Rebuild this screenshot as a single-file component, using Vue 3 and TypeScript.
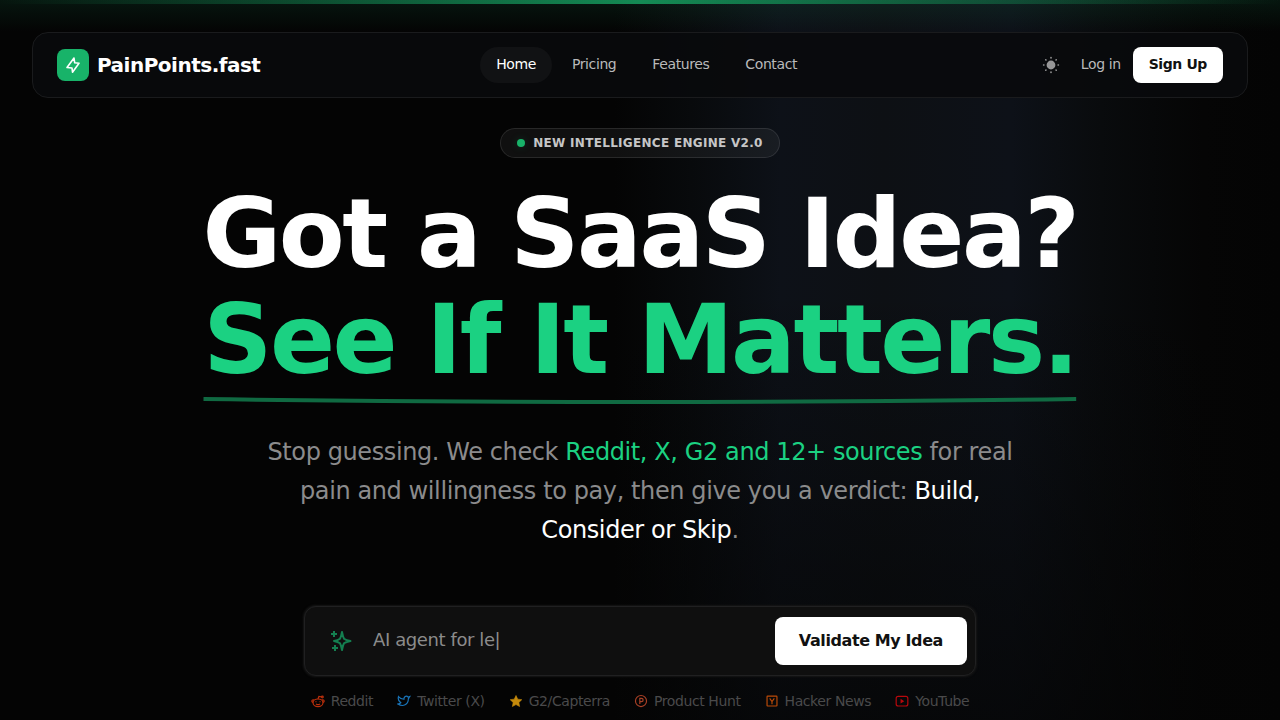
<script setup lang="ts">
import { ref } from 'vue'

interface NavItem {
  label: string
  active: boolean
}

interface Source {
  name: string
  icon: 'reddit' | 'twitter' | 'star' | 'producthunt' | 'hackernews' | 'youtube'
}

const navItems: NavItem[] = [
  { label: 'Home', active: true },
  { label: 'Pricing', active: false },
  { label: 'Features', active: false },
  { label: 'Contact', active: false },
]

const sources: Source[] = [
  { name: 'Reddit', icon: 'reddit' },
  { name: 'Twitter (X)', icon: 'twitter' },
  { name: 'G2/Capterra', icon: 'star' },
  { name: 'Product Hunt', icon: 'producthunt' },
  { name: 'Hacker News', icon: 'hackernews' },
  { name: 'YouTube', icon: 'youtube' },
]

const rays = [0, 45, 90, 135, 180, 225, 270, 315]
const idea = ref('')
</script>

<template>
  <div class="page">
    <div class="beam" aria-hidden="true"></div>

    <header class="navbar">
      <a class="brand" href="#">
        <span class="brand-mark">
          <svg viewBox="0 0 32 32" aria-hidden="true">
            <path d="M17 9L10 18.500L15 19L15.500 23.200L22 14.200L17.700 13.800Z" />
          </svg>
        </span>
        <span class="brand-name">PainPoints.fast</span>
      </a>

      <nav class="links" aria-label="Main">
        <a
          v-for="item in navItems"
          :key="item.label"
          class="link"
          :class="{ active: item.active }"
          href="#"
          >{{ item.label }}</a
        >
      </nav>

      <div class="actions">
        <button class="theme" type="button" aria-label="Toggle theme">
          <svg viewBox="0 0 20 20" aria-hidden="true">
            <circle cx="10" cy="10" r="3.600" fill="currentColor" />
            <path
              v-for="ray in rays"
              :key="ray"
              d="M10 2.600V2.900"
              :transform="`rotate(${ray} 10 10)`"
            />
          </svg>
        </button>
        <a class="login" href="#">Log in</a>
        <a class="signup" href="#">Sign Up</a>
      </div>
    </header>

    <main class="hero">
      <p class="badge"><span class="dot"></span>NEW INTELLIGENCE ENGINE V2.0</p>

      <h1 class="title">
        <span class="line">Got a SaaS Idea?</span>
        <span class="line accent">
          See If It Matters.
          <svg class="stroke" viewBox="0 0 874 12" preserveAspectRatio="none" aria-hidden="true">
            <path d="M0.500 4Q437 10 873.500 4" />
          </svg>
        </span>
      </h1>

      <p class="lead">
        Stop guessing. We check <span class="green">Reddit, X, G2 and 12+ sources</span> for real
        pain and willingness to pay, then give you a verdict:
        <span class="white">Build, Consider or Skip</span>.
      </p>

      <form class="idea" @submit.prevent>
        <svg class="spark" viewBox="0 0 24 24" aria-hidden="true">
          <path
            d="M13 3Q13.800 7.500 15 9.700Q17 11.200 21.500 12Q17 12.800 15 14.300Q13.800 16.500 13 21Q12.200 16.500 11 14.300Q9 12.800 5 12Q9 11.200 11 9.700Q12.200 7.500 13 3Z"
          />
          <path d="M5 2V8M2 5H8M6 16V22M3 19H9" />
        </svg>
        <input
          v-model="idea"
          class="field"
          type="text"
          aria-label="Your SaaS idea"
          placeholder="AI agent for le|"
        />
        <button class="submit" type="submit">Validate My Idea</button>
      </form>

      <ul class="sources">
        <li v-for="source in sources" :key="source.name" class="source">
          <svg class="icon" :class="source.icon" viewBox="0 0 24 24" aria-hidden="true">
            <g v-if="source.icon === 'reddit'">
              <ellipse cx="12" cy="15" rx="8.500" ry="6.500" />
              <path d="M12 8.500L13.500 4L18 5M5 10.500C1.500 9 0 13 3.500 14.500M19 10.500C22.500 9 24 13 20.500 14.500" />
              <circle cx="19.500" cy="5" r="1.500" />
              <path d="M8.500 12.500v1.500M15.500 12.500v1.500M8.500 17.200q3.500 2 7 0" />
            </g>
            <path
              v-else-if="source.icon === 'twitter'"
              d="M22 4.500c-1 .5-2 .7-3 .8-1.500-1.700-4-1.700-5.500-.5-1.300 1-1.700 2.500-1.500 4.200C8 9 5 7.500 2.500 4.500c-1 4 0 8 4 10.500-1.300 1.200-3 2-5 2.200 9 5.500 18 1 18-9 .8-.8 1.700-2 2.500-3.700z"
            />
            <path
              v-else-if="source.icon === 'star'"
              d="M12 2.500l3 6.300 7 .9-5.100 4.800 1.300 7-6.200-3.400-6.200 3.400 1.300-7L2 9.700l7-.9z"
            />
            <g v-else-if="source.icon === 'producthunt'">
              <circle cx="12" cy="12" r="9.500" />
              <path d="M10 17V7.500h2.800a2.800 2.800 0 010 5.700H10" />
            </g>
            <g v-else-if="source.icon === 'hackernews'">
              <rect x="3.500" y="3.500" width="17" height="17" rx="1" />
              <path d="M8 7.500l4 5.500 4-5.500M12 13v4.500" />
            </g>
            <g v-else>
              <rect x="2" y="4" width="20" height="16.500" rx="3.500" />
              <path d="M10.500 10v4.500l3.500-2.200z" fill="currentColor" />
            </g>
          </svg>
          {{ source.name }}
        </li>
      </ul>
    </main>
  </div>
</template>

<style>
body {
  margin: 0;
  background: #040404;
}
</style>

<style scoped>
.page {
  position: relative;
  box-sizing: border-box;
  min-height: 100vh;
  padding: 32px 32px 8px;
  overflow: hidden;
  font-family: 'DejaVu Sans', sans-serif;
  font-size: 16px;
  letter-spacing: -0.025em;
  color: #fff;
  background:
    linear-gradient(180deg, transparent 40%, rgba(4, 4, 4, 0.7) 100%),
    linear-gradient(
      90deg,
      #040404 0%,
      #040404 48%,
      #080a0c 54%,
      #0d1118 61%,
      #0d1014 69%,
      #0d1118 79%,
      #090b0d 86%,
      #050505 94%,
      #040404 100%
    );
}

.beam {
  position: absolute;
  top: 0;
  left: 0;
  right: 0;
  height: 32px;
  background:
    linear-gradient(90deg, transparent, #148a54, transparent) top / 100% 4px no-repeat,
    linear-gradient(180deg, rgba(22, 150, 92, 0.12), transparent);
}

.navbar {
  position: relative;
  display: flex;
  align-items: center;
  justify-content: space-between;
  box-sizing: border-box;
  height: 66px;
  padding: 0 24px;
  border: 1px solid #1a1b1d;
  border-radius: 16px;
  background: rgba(9, 10, 12, 0.9);
}

a {
  color: inherit;
  text-decoration: none;
}

.brand {
  display: flex;
  align-items: center;
  gap: 8px;
}

.brand-mark {
  width: 32px;
  height: 32px;
  border-radius: 8px;
  background: #18b369;
}

.brand-mark svg {
  display: block;
  fill: none;
  stroke: #fff;
  stroke-width: 1.6;
  stroke-linejoin: round;
}

.brand-name {
  font-size: 20px;
  line-height: 28px;
  font-weight: 700;
  letter-spacing: -0.025em;
}

.links {
  display: flex;
  gap: 4px;
}

.link,
.login,
.signup {
  padding: 7px 16px 9px;
  font-size: 14px;
  line-height: 20px;
  color: #b9b9ba;
}

.link {
  border-radius: 18px;
}

.link.active {
  color: #fff;
  background: #111214;
}

.actions {
  display: flex;
  align-items: center;
  gap: 12px;
}

.theme {
  display: flex;
  align-items: center;
  justify-content: center;
  width: 36px;
  height: 36px;
  padding: 0;
  border: 0;
  background: none;
  color: #979798;
}

.theme svg {
  width: 20px;
  height: 20px;
  stroke: currentColor;
  stroke-width: 1.6;
  stroke-linecap: round;
}

.login {
  padding-left: 0;
  padding-right: 0;
}

.signup {
  border-radius: 8px;
  background: #fff;
  color: #111;
  font-weight: 700;
}

.hero {
  position: relative;
  display: flex;
  flex-direction: column;
  align-items: center;
  padding-top: 30px;
}

.badge {
  display: flex;
  align-items: center;
  gap: 8px;
  margin: 0;
  padding: 6px 16px;
  border: 1px solid rgba(255, 255, 255, 0.1);
  border-radius: 15px;
  background: rgba(255, 255, 255, 0.05);
  color: #c6c6c7;
  font-size: 12px;
  line-height: 16px;
  font-weight: 700;
  letter-spacing: 0.025em;
}

.dot {
  width: 8px;
  height: 8px;
  border-radius: 50%;
  background: #18b369;
  box-shadow: 0 0 8px rgba(24, 179, 105, 0.2);
}

.title {
  margin: 23px 0 0;
  font-size: 96px;
  line-height: 106px;
  font-weight: 700;
  letter-spacing: -0.025em;
  text-align: center;
}

.line {
  display: block;
}

.accent {
  position: relative;
  width: fit-content;
  margin: 0 auto;
  color: #1bd182;
}

.stroke {
  position: absolute;
  left: 0;
  bottom: -14px;
  width: 100%;
  height: 12px;
  overflow: visible;
  fill: none;
  stroke: #106a42;
  stroke-width: 4;
}

.lead {
  max-width: 768px;
  margin: 40px 0 0;
  color: #8b8b8c;
  font-size: 24px;
  line-height: 39px;
  text-align: center;
}

.green {
  color: #1bd182;
}

.white {
  color: #fff;
}

.idea {
  display: flex;
  align-items: center;
  box-sizing: border-box;
  width: 100%;
  max-width: 672px;
  margin-top: 56px;
  padding: 10px 8px 10px 24px;
  border: 1px solid #202021;
  border-radius: 12px;
  background: #0f0f0f;
  box-shadow: 0 0 2px 1px #161616;
}

.spark {
  flex: none;
  width: 24px;
  height: 24px;
  fill: none;
  stroke: #147f50;
  stroke-width: 2;
  stroke-linejoin: round;
}

.field {
  flex: 1;
  box-sizing: border-box;
  min-width: 0;
  height: 48px;
  padding: 0 20px 4px;
  border: 0;
  outline: 0;
  background: none;
  color: #fff;
  font: 18px/28px 'DejaVu Sans', sans-serif;
  letter-spacing: inherit;
}

.field::placeholder {
  color: #8b8b8b;
  opacity: 1;
}

.submit {
  height: 48px;
  padding: 0 24px;
  border: 0;
  border-radius: 8px;
  background: #fff;
  color: #111;
  font: 700 16px/24px 'DejaVu Sans', sans-serif;
  letter-spacing: inherit;
}

.sources {
  display: flex;
  flex-wrap: wrap;
  justify-content: center;
  gap: 8px 24px;
  margin: 15px 0 0;
  padding: 0;
  list-style: none;
  color: #4a4a4b;
  font-size: 14px;
  line-height: 20px;
}

.source {
  display: flex;
  align-items: center;
  gap: 6px;
}

.icon {
  width: 14px;
  height: 14px;
  fill: none;
  stroke: currentColor;
  stroke-width: 2;
}

.reddit {
  color: #bd300c;
}

.twitter {
  color: #1975ba;
}

.star {
  color: #c58a0b;
  fill: currentColor;
  stroke-width: 1;
}

.producthunt {
  color: #a94026;
}

.hackernews {
  color: #bd4b08;
}

.youtube {
  color: #b9080c;
}
</style>
